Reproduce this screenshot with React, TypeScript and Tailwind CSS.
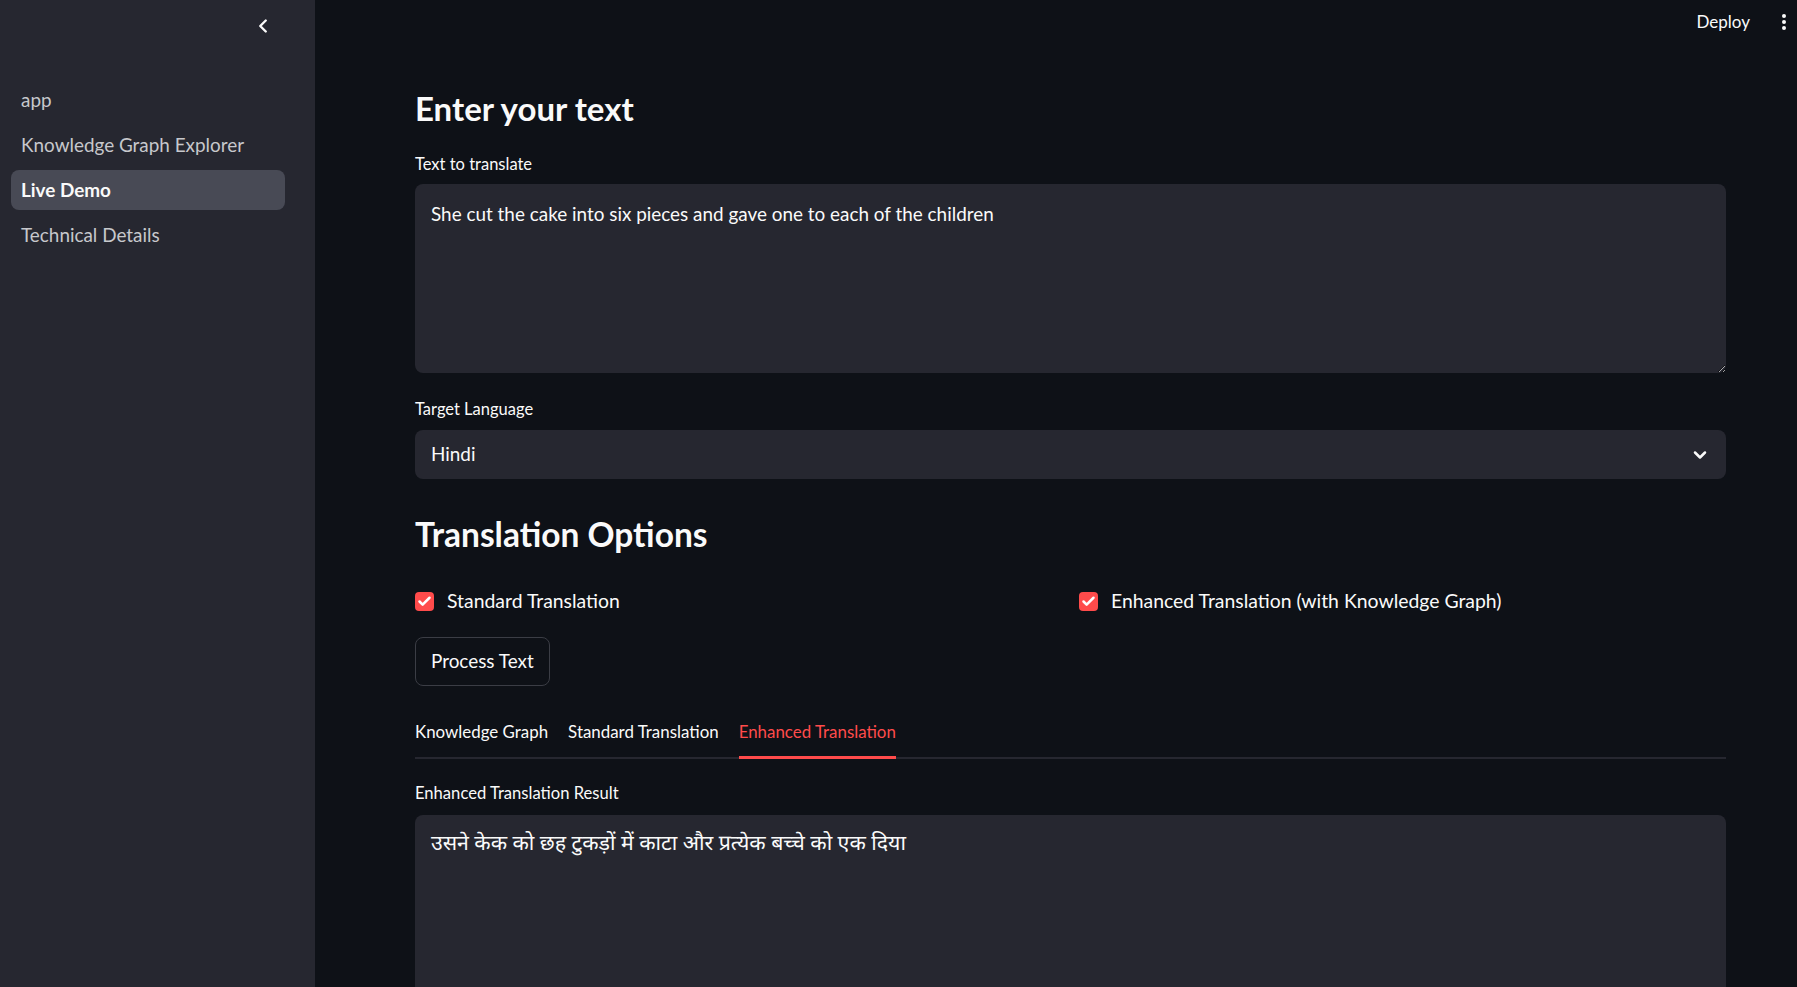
import React, { useState } from "react";
import { ChevronLeft, ChevronDown, Check } from "lucide-react";

const font = { fontFamily: 'Lato, "Noto Sans Devanagari", "Noto Sans", sans-serif' };

const pages = ["app", "Knowledge Graph Explorer", "Live Demo", "Technical Details"];

const Sidebar = () => {
  return (
    <aside className="w-[315px] shrink-0 bg-[#262730] h-full flex flex-col">
      {/* Collapse */}
      <div className="h-[52px] flex items-center justify-end pr-[41px]">
        <ChevronLeft size={22} strokeWidth={2.6} className="text-[#fafafa]" />
      </div>

      {/* Nav */}
      <nav className="flex flex-col gap-[5px] pl-[11px] pr-[30px] pt-[28px]">
        {pages.map((p) => (
          <div
            key={p}
            className={
              p === "Live Demo"
                ? "h-[40px] rounded-[8px] bg-[#484a55] flex items-center px-[10px] text-[18.9px] font-bold text-[#fafafa]"
                : "h-[40px] flex items-center px-[10px] text-[18.9px] text-[#c7c8cc]"
            }
          >
            {p}
          </div>
        ))}
      </nav>
    </aside>
  );
};

const CheckBox = ({ label }: { label: string }) => (
  <label className="h-[24px] flex items-center gap-[13px] text-[19.4px] text-[#fafafa]">
    <span className="w-[19px] h-[19px] rounded-[4px] bg-[#ff4b4b] flex items-center justify-center">
      <Check size={15} strokeWidth={4} className="text-white" />
    </span>
    {label}
  </label>
);

const App = () => {
  const [text, setText] = useState("She cut the cake into six pieces and gave one to each of the children");
  const [tab, setTab] = useState("Enhanced Translation");
  const tabs = ["Knowledge Graph", "Standard Translation", "Enhanced Translation"];

  return (
    <div style={font} className="h-[987px] w-full flex overflow-hidden bg-[#0e1117] text-[#fafafa]">
      <Sidebar />

      <main className="flex-1 flex flex-col overflow-hidden">
        {/* Top bar */}
        <div className="h-[44px] shrink-0 flex items-center justify-end gap-[27px] pr-[6px]">
          <span className="text-[17px]">Deploy</span>
          <div className="flex flex-col gap-[2px] w-[14px] items-center">
            <span className="w-[4px] h-[4px] rounded-full bg-[#fafafa]" />
            <span className="w-[4px] h-[4px] rounded-full bg-[#fafafa]" />
            <span className="w-[4px] h-[4px] rounded-full bg-[#fafafa]" />
          </div>
        </div>

        <div className="pl-[100px] pr-[71px] flex flex-col">
          <h2 className="text-[33px] font-bold leading-none mt-[44px] h-[40px] flex items-center">Enter your text</h2>

          <div className="mt-[26px] h-[20px] flex items-center text-[16.5px]">Text to translate</div>
          <textarea
            value={text}
            onChange={(e) => setText(e.target.value)}
            className="mt-[10px] h-[189px] w-full bg-[#262730] rounded-[8px] px-[16px] py-[16px] text-[18.9px] leading-[28px] outline-none resize-y [color-scheme:dark]"
          />

          <div className="mt-[26px] h-[20px] flex items-center text-[16.5px]">Target Language</div>
          <div className="mt-[11px] h-[49px] w-full bg-[#262730] rounded-[8px] flex items-center justify-between pl-[16px] pr-[16px] text-[18.9px]">
            <span>Hindi</span>
            <ChevronDown size={20} strokeWidth={3} />
          </div>

          <h2 className="text-[33.5px] font-bold leading-none mt-[36px] h-[40px] flex items-center">Translation Options</h2>

          <div className="mt-[34px] grid grid-cols-2 gap-x-[17px]">
            <CheckBox label="Standard Translation" />
            <CheckBox label="Enhanced Translation (with Knowledge Graph)" />
          </div>

          <button className="mt-[24px] self-start h-[49px] px-[15px] rounded-[8px] border border-[#3b3d45] bg-[#0e1117] text-[18.9px]">
            Process Text
          </button>

          {/* Tabs */}
          <div className="mt-[21px] flex gap-[20px] border-b-[2px] border-[#262730] h-[52px]">
            {tabs.map((t) => (
              <button
                key={t}
                onClick={() => setTab(t)}
                className={
                  tab === t
                    ? "h-[52px] border-b-[3px] border-[#ff4b4b] text-[#ff4b4b] text-[16.9px]"
                    : "h-[52px] border-b-[3px] border-transparent text-[#fafafa] text-[16.9px]"
                }
              >
                {t}
              </button>
            ))}
          </div>

          <div className="mt-[24px] h-[20px] flex items-center text-[16.6px]">Enhanced Translation Result</div>
          <textarea
            readOnly
            value="उसने केक को छह टुकड़ों में काटा और प्रत्येक बच्चे को एक दिया"
            className="mt-[12px] h-[189px] w-full bg-[#262730] rounded-[8px] px-[16px] pt-[13px] pb-[16px] text-[21.3px] leading-[28px] outline-none resize-y [color-scheme:dark]"
          />
        </div>
      </main>
    </div>
  );
};

export default App;
